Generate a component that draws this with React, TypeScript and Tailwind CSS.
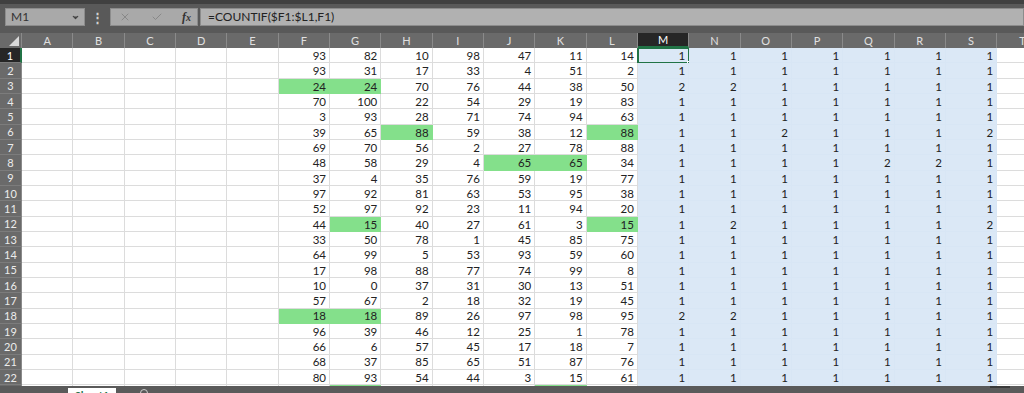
import { Check, ChevronDown, X } from "lucide-react";

const cols = ["A", "B", "C", "D", "E", "F", "G", "H", "I", "J", "K", "L", "M", "N", "O", "P", "Q", "R", "S", "T"];

// F..L values per row, green flags mark duplicates
const data: number[][] = [
  [93, 82, 10, 98, 47, 11, 14],
  [93, 31, 17, 33, 4, 51, 2],
  [24, 24, 70, 76, 44, 38, 50],
  [70, 100, 22, 54, 29, 19, 83],
  [3, 93, 28, 71, 74, 94, 63],
  [39, 65, 88, 59, 38, 12, 88],
  [69, 70, 56, 2, 27, 78, 88],
  [48, 58, 29, 4, 65, 65, 34],
  [37, 4, 35, 76, 59, 19, 77],
  [97, 92, 81, 63, 53, 95, 38],
  [52, 97, 92, 23, 11, 94, 20],
  [44, 15, 40, 27, 61, 3, 15],
  [33, 50, 78, 1, 45, 85, 75],
  [64, 99, 5, 53, 93, 59, 60],
  [17, 98, 88, 77, 74, 99, 8],
  [10, 0, 37, 31, 30, 13, 51],
  [57, 67, 2, 18, 32, 19, 45],
  [18, 18, 89, 26, 97, 98, 95],
  [96, 39, 46, 12, 25, 1, 78],
  [66, 6, 57, 45, 17, 18, 7],
  [68, 37, 85, 65, 51, 87, 76],
  [80, 93, 54, 44, 3, 15, 61],
  [0, 0, 0, 0, 0, 0, 0],
];

const greens: Record<number, number[]> = {
  2: [0, 1],
  5: [2, 6],
  7: [4, 5],
  11: [1, 6],
  17: [0, 1],
  22: [1, 5],
};

function countRow(row: number[]) {
  return row.map((v) => row.filter((x) => x === v).length);
}

function Cell({ value, kind, active }: { value?: number | string; kind: "white" | "green" | "blue"; active?: boolean }) {
  const bg =
    kind === "green"
      ? "bg-[#84e08b] border-[#84e08b]"
      : kind === "blue"
      ? "bg-[#dbe8f6] border-[#d8e6f5]"
      : "bg-white border-[#dcdcdc]";
  return (
    <div
      className={`relative w-[51.33px] shrink-0 h-full border-r border-b ${bg} flex items-center justify-end pr-[3px] text-[11.5px] text-[#222] leading-none`}
    >
      {active && (
        <div className="absolute -left-[1px] -top-[1px] w-[53px] h-[17px] border-2 border-[#217346]">
          <div className="absolute -right-[4px] -bottom-[4px] w-[5px] h-[5px] bg-[#217346] border border-white" />
        </div>
      )}
      <span className="relative pt-[1px]">{value}</span>
    </div>
  );
}

export default function App() {
  return (
    <div className="w-[1024px] h-[393px] overflow-hidden bg-[#595959] flex flex-col font-['Lato',sans-serif]">
      {/* top strip */}
      <div className="h-[4px] bg-[#404040] shrink-0" />

      {/* formula bar */}
      <div className="h-[26px] shrink-0 flex items-center pl-[5px] gap-0">
        <div className="w-[80px] h-[18px] bg-[#a9a9a9] border border-[#8c8c8c] flex items-center justify-between pl-[5px] pr-[4px] text-[12px] text-[#333]">
          <span>M1</span>
          <ChevronDown className="w-[9px] h-[9px] text-[#444]" strokeWidth={3} fill="#444" />
        </div>
        <div className="w-[25px] flex justify-center text-[#d0d0d0] text-[13px] font-bold leading-none">⋮</div>
        <div className="w-[88px] h-[18px] bg-[#a9a9a9] border border-[#8c8c8c] flex items-center justify-between pl-[8px] pr-[6px]">
          <X className="w-[12px] h-[12px] text-[#808080]" strokeWidth={1.6} />
          <Check className="w-[12px] h-[12px] text-[#808080]" strokeWidth={1.6} />
          <span className="font-['Liberation_Serif',serif] italic font-bold text-[12px] text-[#333] leading-none">
            f<span className="text-[10px]">x</span>
          </span>
        </div>
        <div className="flex-1 ml-[2px] h-[18px] bg-[#b1b1b1] border border-[#8c8c8c] flex items-center pl-[7px] text-[12px] text-[#222]">
          =COUNTIF($F1:$L1,F1)
        </div>
      </div>
      <div className="h-[3px] shrink-0" />

      {/* column headers */}
      <div className="h-[15px] shrink-0 flex bg-[#6a6a6a]">
        <div className="relative w-[22px] shrink-0 h-full border-r border-[#8a8a8a]">
          <div className="absolute right-[2px] bottom-[2px] w-0 h-0 border-l-[10px] border-l-transparent border-b-[10px] border-b-[#d9d9d9]" />
        </div>
        {cols.map((c) => (
          <div
            key={c}
            className={`w-[51.33px] shrink-0 h-full border-r border-[#8a8a8a] flex items-center justify-center text-[11px] leading-none ${
              c === "M" ? "bg-[#262626] text-white border-b-2 border-b-[#217346]" : "text-[#e0e0e0]"
            }`}
          >
            {c}
          </div>
        ))}
      </div>

      {/* grid */}
      <div className="h-[338px] shrink-0 overflow-hidden flex flex-col">
        {data.map((row, r) => {
          const counts = countRow(row);
          const g = greens[r] || [];
          return (
            <div key={r} className="h-[15.33px] shrink-0 flex">
              <div
                className={`w-[22px] shrink-0 h-full flex items-center justify-center text-[11px] leading-none border-b border-[#7c7c7c] ${
                  r === 0 ? "bg-[#262626] text-white border-r-2 border-r-[#217346]" : "bg-[#6a6a6a] text-[#ececec] border-r border-r-[#8a8a8a]"
                }`}
              >
                {r + 1}
              </div>
              {cols.slice(0, 5).map((c) => (
                <Cell key={c} kind="white" />
              ))}
              {row.map((v, i) => (
                <Cell key={i} kind={g.includes(i) ? "green" : "white"} value={r < 22 ? v : ""} />
              ))}
              {counts.map((n, i) => (
                <Cell key={"m" + i} kind="blue" value={r < 22 ? n : ""} active={r === 0 && i === 0} />
              ))}
              <Cell kind="white" />
            </div>
          );
        })}
      </div>

      {/* sheet tabs */}
      <div className="flex-1 relative bg-[#5a5a5a]">
        <div className="absolute left-[68px] top-[2px] w-[48px] h-[14px] bg-white flex justify-center pt-[2px] text-[11px] font-bold text-[#217346] leading-none">
          Sheet1
        </div>
        <div className="absolute left-[140px] top-[3px] w-[8px] h-[8px] rounded-full border border-[#cfcfcf]" />
        <div className="absolute left-[990px] top-0 w-[20px] h-[2px] bg-[#3a3a3a]" />
      </div>
    </div>
  );
}
